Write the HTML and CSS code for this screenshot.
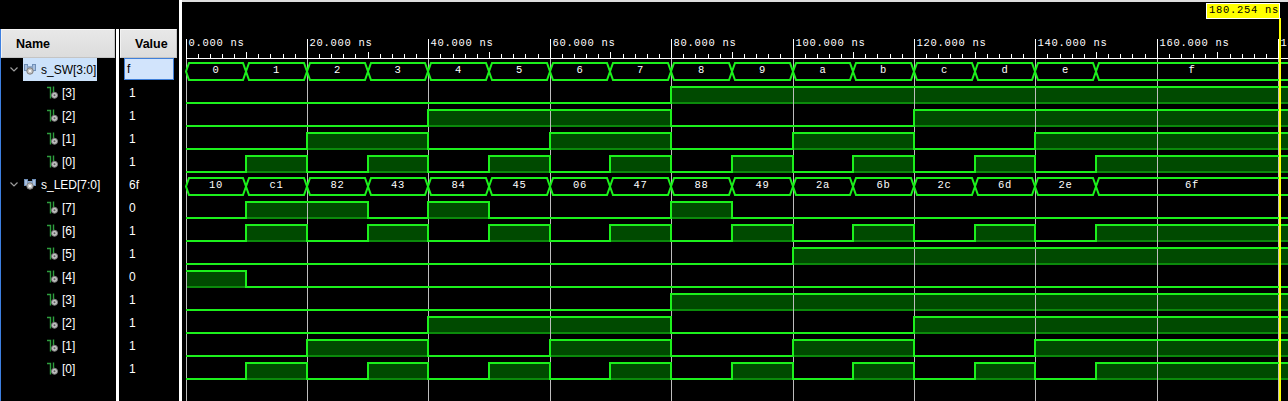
FILE: index.html
```html
<!DOCTYPE html>
<html lang="en">
<head>
  <meta charset="UTF-8" />
  <title>Waveform - tb_top</title>
  <link rel="stylesheet" href="styles.css">
</head>
<body>

  <svg class="defs" width="0" height="0">
    <symbol id="ico-bus" viewBox="0 0 12 11">
      <rect x="0.5" y="0.5" width="3" height="6" fill="#a9bfdc" stroke="#6f8fb8"/>
      <rect x="8.5" y="0.5" width="3" height="6" fill="#a9bfdc" stroke="#6f8fb8"/>
      <rect x="3.5" y="2" width="5" height="3" fill="#8fa9cc"/>
      <circle cx="6" cy="7" r="3.2" fill="#c8c8c8" stroke="#7c7c7c"/>
      <circle cx="6" cy="7" r="1.1" fill="#ffffff"/>
    </symbol>
    <symbol id="ico-bit" viewBox="0 0 11 13">
      <path d="M0 1.5H3.5V12.5" fill="none" stroke="#2e9e3e" stroke-width="1.4"/>
      <path d="M6.5 0.5V6" fill="none" stroke="#2e9e3e" stroke-width="1.4"/>
      <circle cx="7.5" cy="9.3" r="3" fill="#c4c4c4" stroke="#7a7a7a"/>
      <circle cx="7.5" cy="9.3" r="1" fill="#5e5e5e"/>
    </symbol>
  </svg>

  <div class="viewer">
    <div class="names">
      <div class="head">Name</div>
      <div class="row grp">
        <svg class="chev" width="8" height="5"><polyline points="0.5,0.5 4,4 7.5,0.5"/></svg>
        <span class="item sel"><svg class="ico-bus"><use href="#ico-bus"/></svg>s_SW[3:0]</span>
      </div>
      <div class="row bit"><svg class="ico-bit"><use href="#ico-bit"/></svg>[3]</div>
      <div class="row bit"><svg class="ico-bit"><use href="#ico-bit"/></svg>[2]</div>
      <div class="row bit"><svg class="ico-bit"><use href="#ico-bit"/></svg>[1]</div>
      <div class="row bit"><svg class="ico-bit"><use href="#ico-bit"/></svg>[0]</div>
      <div class="row grp">
        <svg class="chev" width="8" height="5"><polyline points="0.5,0.5 4,4 7.5,0.5"/></svg>
        <span class="item"><svg class="ico-bus"><use href="#ico-bus"/></svg>s_LED[7:0]</span>
      </div>
      <div class="row bit"><svg class="ico-bit"><use href="#ico-bit"/></svg>[7]</div>
      <div class="row bit"><svg class="ico-bit"><use href="#ico-bit"/></svg>[6]</div>
      <div class="row bit"><svg class="ico-bit"><use href="#ico-bit"/></svg>[5]</div>
      <div class="row bit"><svg class="ico-bit"><use href="#ico-bit"/></svg>[4]</div>
      <div class="row bit"><svg class="ico-bit"><use href="#ico-bit"/></svg>[3]</div>
      <div class="row bit"><svg class="ico-bit"><use href="#ico-bit"/></svg>[2]</div>
      <div class="row bit"><svg class="ico-bit"><use href="#ico-bit"/></svg>[1]</div>
      <div class="row bit"><svg class="ico-bit"><use href="#ico-bit"/></svg>[0]</div>
    </div>

    <div class="sep"></div>

    <div class="values">
      <div class="head">Value</div>
      <div class="row"><span class="val sel">f</span></div>
      <div class="row"><span class="val">1</span></div>
      <div class="row"><span class="val">1</span></div>
      <div class="row"><span class="val">1</span></div>
      <div class="row"><span class="val">1</span></div>
      <div class="row"><span class="val">6f</span></div>
      <div class="row"><span class="val">0</span></div>
      <div class="row"><span class="val">1</span></div>
      <div class="row"><span class="val">1</span></div>
      <div class="row"><span class="val">0</span></div>
      <div class="row"><span class="val">1</span></div>
      <div class="row"><span class="val">1</span></div>
      <div class="row"><span class="val">1</span></div>
      <div class="row"><span class="val">1</span></div>
    </div>

    <div class="split"></div>

    <div class="wave">
      <svg id="wave" width="1106" height="401"></svg>
    </div>
  </div>

  <script src="wave.js"></script>

</body>
</html>
```

FILE: styles.css
```css
body {
  margin: 0;
  background-color: #000;
  font-family: "Liberation Sans", Arial, sans-serif;
  overflow: hidden;
}
.defs {
  position: absolute;
}
.viewer {
  display: flex;
  width: 1288px;
  height: 401px;
}
.names {
  width: 115px;
  margin-top: 29px;
  border-left: 1px solid #3d7fe0;
}
.sep {
  width: 3px;
  margin-top: 29px;
  background: #fff;
}
.values {
  width: 60px;
  margin-top: 29px;
}
.split {
  width: 3px;
  background: #fff;
}
.wave {
  flex: 1;
}
.wave svg {
  display: block;
}
.head {
  box-sizing: border-box;
  height: 29px;
  display: flex;
  align-items: center;
  background: linear-gradient(#e8e8e8, #dcdcdc);
  border: 1px solid #c4c4c4;
  border-top-color: #f6f6f6;
  border-left-color: #f2f2f2;
  font-size: 12.5px;
  font-weight: bold;
  color: #000;
}
.names .head {
  margin-right: 1px;
  padding-left: 14px;
}
.values .head {
  margin: 0 2px 0 1px;
  padding-left: 14px;
}
.row {
  height: 23px;
  display: flex;
  align-items: center;
  color: #fff;
  font-size: 12px;
}
.row.grp {
  padding-left: 9px;
}
.row.bit {
  padding-left: 46px;
}
.chev {
  margin-right: 5px;
}
.chev polyline {
  fill: none;
  stroke: #9c9c9c;
  stroke-width: 1.2;
}
.item {
  height: 23px;
  display: flex;
  align-items: center;
  padding: 0 1px;
}
.item.sel {
  background: #cce2fb;
  color: #000;
}
.ico-bus {
  width: 12px;
  height: 11px;
  margin-right: 5px;
}
.ico-bit {
  width: 11px;
  height: 13px;
  margin: -1px 4px 0 0;
}
.val {
  padding-left: 10px;
}
.val.sel {
  box-sizing: border-box;
  width: 50px;
  height: 22px;
  margin: -1px 0 0 5px;
  padding-left: 2px;
  display: flex;
  align-items: center;
  background: #d2e4fc;
  border: 1px solid #3f7fd9;
  color: #000;
}

/* waveform drawing */
.frame { fill: #dedede; }
.tick { stroke: #fff; stroke-width: 1; }
.grid { stroke: #bdbdbd; stroke-width: 1; }
.tl, .bv, .ct {
  font-family: "Liberation Mono", "Courier New", monospace;
  font-size: 10.5px;
  letter-spacing: 0.7px;
}
.tl, .bv { fill: #fff; }
.bv { text-anchor: middle; }
.ct { fill: #000; }
.hi { fill: #004a00; }
.base { stroke: #0b8a0b; stroke-width: 2; }
.sig, .bus { fill: none; stroke: #1cf01c; stroke-width: 2; }
.cursor { stroke: #ffff00; stroke-width: 2; }
.cbox { fill: #ffff00; stroke: #fff; stroke-width: 1; }
```

FILE: wave.js
```js
const NS = 'http://www.w3.org/2000/svg';
const svg = document.getElementById('wave');

const W = 1106;      // width of the wave pane
const X0 = 3.5;      // where 0 ns sits
const PX = 6.07;     // pixels per ns
const TOP = 59;      // first row
const ROW = 23;

function px(t) {
  return Math.round(X0 + t * PX);
}

function group() {
  const g = document.createElementNS(NS, 'g');
  svg.appendChild(g);
  return g;
}

function add(parent, tag, attrs, text) {
  const e = document.createElementNS(NS, tag);
  for (const k in attrs) e.setAttribute(k, attrs[k]);
  if (text !== undefined) e.textContent = text;
  parent.appendChild(e);
  return e;
}

const fills = group();
const grid = group();
const lines = group();
const texts = group();
const ruler = group();

// edge of segment k (values change every 10 ns, last one runs off the pane)
function edge(k) {
  return k < 16 ? px(10 * k) : W + 10;
}

// time ruler
add(ruler, 'rect', { x: 0, y: 0, width: W, height: 2, class: 'frame' });
for (let t = 0; t <= 180; t += 2) {
  const x = px(t) + 0.5;
  if (t % 20 === 0) {
    add(ruler, 'line', { x1: x, x2: x, y1: 39, y2: 58, class: 'tick' });
    add(ruler, 'text', { x: x + 2, y: 46, class: 'tl' }, t.toFixed(3) + ' ns');
    add(grid, 'line', { x1: x, x2: x, y1: 59, y2: 401, class: 'grid' });
  } else {
    add(ruler, 'line', { x1: x, x2: x, y1: t % 10 === 0 ? 52 : 54, y2: 58, class: 'tick' });
  }
}
add(ruler, 'line', { x1: px(0), x2: W, y1: 58.5, y2: 58.5, class: 'tick' });

function drawBus(vals, digits, y0) {
  const hi = y0 + 4, lo = y0 + 21, mid = (hi + lo) / 2;
  vals.forEach((v, k) => {
    const a = edge(k), b = edge(k + 1);
    add(lines, 'path', {
      d: `M${a} ${mid}L${a + 3} ${hi}H${b - 3}L${b} ${mid}L${b - 3} ${lo}H${a + 3}Z`,
      class: 'bus'
    });
    const cx = (a + Math.min(b, W)) / 2;
    add(texts, 'text', { x: cx, y: y0 + 13.5, class: 'bv' },
      v.toString(16).padStart(digits, '0'));
  });
}

function drawBit(vals, bit, y0) {
  const hi = y0 + 5, lo = y0 + 21;
  const lvl = vals.map(v => (v >> bit) & 1);

  let start = 0;
  for (let k = 1; k <= 16; k++) {
    if (k === 16 || lvl[k] !== lvl[start]) {
      const a = edge(start), b = edge(k);
      if (lvl[start]) {
        add(fills, 'rect', { x: a, y: hi, width: b - a, height: lo - hi, class: 'hi' });
        add(fills, 'line', { x1: a, x2: b, y1: lo, y2: lo, class: 'base' });
      }
      start = k;
    }
  }

  let d = `M${edge(0)} ${lvl[0] ? hi : lo}`;
  for (let k = 1; k < 16; k++) {
    if (lvl[k] !== lvl[k - 1]) d += `H${edge(k)}V${lvl[k] ? hi : lo}`;
  }
  d += `H${W + 10}`;
  add(lines, 'path', { d, class: 'sig' });
}

const sw = [0, 1, 2, 3, 4, 5, 6, 7, 8, 9, 10, 11, 12, 13, 14, 15];
const led = [0x10, 0xc1, 0x82, 0x43, 0x84, 0x45, 0x06, 0x47,
             0x88, 0x49, 0x2a, 0x6b, 0x2c, 0x6d, 0x2e, 0x6f];

const rows = [{ bus: sw, digits: 1 }];
for (let b = 3; b >= 0; b--) rows.push({ src: sw, bit: b });
rows.push({ bus: led, digits: 2 });
for (let b = 7; b >= 0; b--) rows.push({ src: led, bit: b });

rows.forEach((r, i) => {
  const y0 = TOP + i * ROW;
  if (r.bus) drawBus(r.bus, r.digits, y0);
  else drawBit(r.src, r.bit, y0);
});

// cursor at 180.254 ns
add(ruler, 'line', { x1: 1098, x2: 1098, y1: 18, y2: 401, class: 'cursor' });
add(ruler, 'rect', { x: 1024.5, y: 3.5, width: 73, height: 15, class: 'cbox' });
add(ruler, 'text', { x: 1027, y: 12.5, class: 'ct' }, '180.254 ns');
```
